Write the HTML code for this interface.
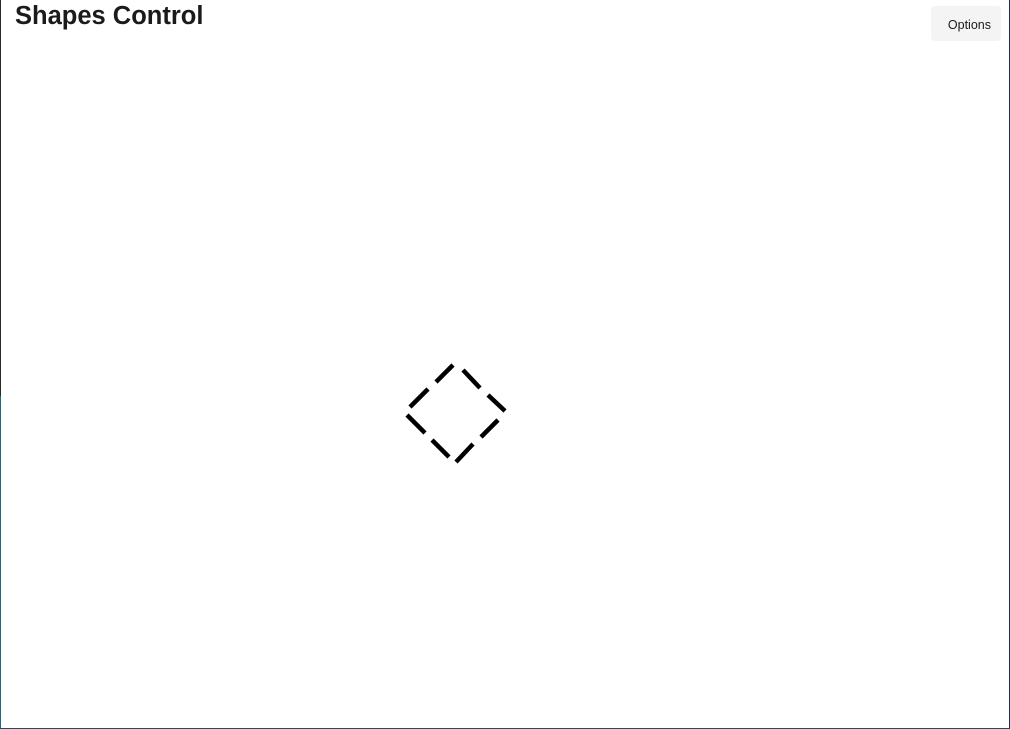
<!DOCTYPE html>
<html><head><style>
html,body{margin:0;padding:0;}
body{width:1010px;height:729px;position:relative;overflow:hidden;background:#fff;font-family:"Liberation Sans",sans-serif;}
.bl1{position:absolute;left:0;top:0;width:1px;height:396px;background:#2a2a2a;}
.bl2{position:absolute;left:0;top:396px;width:1px;height:333px;background:#1a6a80;}
.br{position:absolute;right:0;top:0;width:1px;height:729px;background:#1f3350;}
.bb{position:absolute;left:0;bottom:0;width:1010px;height:1px;background:#1f4a68;}
h1{position:absolute;left:15px;top:1px;margin:0;font-size:25.5px;font-weight:bold;color:#1b1b1b;letter-spacing:0px;line-height:30px;}
.btn{position:absolute;left:931px;top:6px;width:70px;height:35px;background:#f4f4f4;border-radius:4px;font-size:12.5px;color:#1b1b1b;line-height:38px;text-align:right;box-sizing:border-box;padding-right:10px;}
</style></head><body>
<div class="bl1"></div><div class="bl2"></div><div class="br"></div><div class="bb"></div>
<h1>Shapes Control</h1>
<div class="btn">Options</div>
<svg width="1010" height="729" style="position:absolute;left:0;top:0" stroke="#000" stroke-width="4.5" stroke-linecap="butt">
<line x1="453" y1="365" x2="436" y2="382"/>
<line x1="428" y1="389" x2="410" y2="407"/>
<line x1="463" y1="370" x2="480" y2="388"/>
<line x1="488" y1="395" x2="505" y2="411"/>
<line x1="498" y1="420" x2="481" y2="437"/>
<line x1="473" y1="444" x2="456" y2="462"/>
<line x1="407" y1="415" x2="425" y2="433"/>
<line x1="432" y1="440" x2="449" y2="457"/>
</svg>
</body></html>
